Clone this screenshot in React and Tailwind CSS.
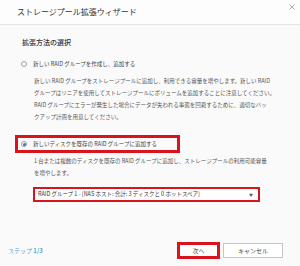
import React from 'react';

const jp = "font-['Noto_Sans_CJK_JP','Noto_Sans',sans-serif]";

function Radio({ checked }) {
  return (
    <span className="w-[6px] h-[6px] rounded-full border border-[#9a9a9a] bg-white flex items-center justify-center flex-shrink-0">
      {checked && <span className="w-[3px] h-[3px] rounded-full bg-[#2f7fd1]" />}
    </span>
  );
}

export default function App() {
  return (
    <div className={`w-[300px] h-[266px] bg-[#fafafa] flex flex-col ${jp} text-[#444] overflow-hidden`}>
      {/* Header */}
      <div className="h-[25px] border-b border-[#e4e4e4] bg-[#fdfdfd] flex justify-between pl-[17px] pr-[5px]">
        <span className="self-center text-[8px] text-[#333] whitespace-nowrap">ストレージプール拡張ウィザード</span>
        <svg width="6" height="6" viewBox="0 0 6 6" className="mt-[4px]">
          <path d="M0.5 0.5 L5.5 5.5 M5.5 0.5 L0.5 5.5" stroke="#9a9a9a" strokeWidth="0.8" />
        </svg>
      </div>

      {/* Body */}
      <div className="flex flex-col pl-[22px]">
        <div className="mt-[12px] h-[10px] leading-[10px] text-[7px] font-medium text-[#333]">拡張方法の選択</div>

        <div className="mt-[12px] h-[10px] flex items-center gap-[6px] -ml-[1px] text-[5.5px]">
          <Radio />
          <span className="whitespace-nowrap">新しい RAID グループを作成し、追加する</span>
        </div>

        <div className="mt-[6px] pl-[12px] text-[5.5px] leading-[12px] text-[#555] whitespace-nowrap">
          <div>新しい RAID グループをストレージプールに追加し、利用できる容量を増やします。新しい RAID</div>
          <div>グループはリニアを使用してストレージプールにボリュームを追加することに注意してください。</div>
          <div>RAID グループにエラーが発生した場合にデータが失われる事態を回避するために、適切なバッ</div>
          <div>クアップ計画を用意してください。</div>
        </div>

        <div className="mt-[12px] -ml-[7px] w-[165px] h-[18px] border-[3px] border-[#d8141c] flex items-center gap-[6px] pl-[3px] text-[5.5px]">
          <Radio checked />
          <span className="whitespace-nowrap">新しいディスクを既存の RAID グループに追加する</span>
        </div>

        <div className="mt-[2px] pl-[12px] text-[5.5px] leading-[12px] text-[#555] whitespace-nowrap">
          <div>1 台または複数のディスクを既存の RAID グループに追加し、ストレージプールの利用可能容量</div>
          <div>を増やします。</div>
        </div>

        <div className="mt-[8px] ml-[11px] w-[227px] h-[15px] border-[2px] border-[#d8141c] bg-white flex items-center justify-between pl-[3px] pr-[5px] text-[5.5px] text-[#333]">
          <span className="whitespace-nowrap">RAID グループ 1 - [NAS ホスト: 合計: 3 ディスクと 0 ホットスペア]</span>
          <span className="text-[4px] text-[#555]">▼</span>
        </div>
      </div>

      {/* Footer */}
      <div className="mt-auto mb-[7px] h-[17px] flex items-center justify-between pl-[8px] pr-[17px]">
        <span className="text-[6px] text-[#4fa8c7] whitespace-nowrap">
          ステップ <span className="font-bold">1/3</span>
        </span>
        <div className="flex items-center gap-[3px]">
          <button className="w-[43px] h-[17px] border-[3px] border-[#d8141c] bg-white text-[6px] text-[#444] flex items-center justify-center">次へ</button>
          <button className="w-[60px] h-[15px] border border-[#c6c6c6] bg-white text-[6px] text-[#444] flex items-center justify-center">キャンセル</button>
        </div>
      </div>
    </div>
  );
}
